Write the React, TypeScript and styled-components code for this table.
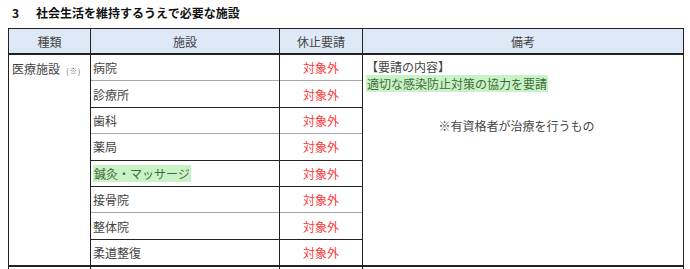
import React from "react";
import styled, { createGlobalStyle } from "styled-components";

const Global = createGlobalStyle`
  html, body { margin: 0; padding: 0; overflow: hidden; background: #fff; }
  body { font-family: "Noto Sans CJK JP", "Noto Sans", sans-serif; color: #333; }
`;

const Page = styled.div`
  width: 690px;
  height: 269px;
  overflow: hidden;
  padding: 0 0 0 8px;
  box-sizing: border-box;
`;

const Title = styled.h2`
  margin: 0;
  height: 28px;
  display: flex;
  align-items: center;
  padding-left: 4px;
  font-size: 12px;
  font-weight: 700;
  color: #111;
  gap: 17px;
  line-height: 1;
  padding-bottom: 2px;
  box-sizing: border-box;
`;

const Table = styled.table`
  border-collapse: collapse;
  table-layout: fixed;
  width: 675px;
  font-size: 12px;
  line-height: 17px;
`;

const Th = styled.th`
  background: #dde9f6;
  border: 1px solid #222;
  border-bottom-width: 2px;
  height: 24px;
  padding: 0;
  font-weight: 400;
  color: #444;
  text-align: center;
  vertical-align: middle;
`;

const Cell = styled.td<{ $line?: "dark" | "gray"; $center?: boolean }>`
  border-left: 1px solid #222;
  border-right: 1px solid #222;
  border-top: 1px solid ${(p) => (p.$line === "gray" ? "#a8a8a8" : "#222")};
  height: 25.4px;
  padding: 0 2px;
  vertical-align: middle;
  text-align: ${(p) => (p.$center ? "center" : "left")};
  color: #444;
  white-space: nowrap;
`;

const MergedCell = styled.td`
  border: 1px solid #222;
  vertical-align: top;
  padding: 3px 2px 0 3px;
  color: #444;
`;

const TypeLabel = styled.span`
  display: inline-flex;
  align-items: baseline;
  gap: 6px;
  padding-top: 2px;
`;

const Note = styled.span`
  font-size: 8px;
  color: #666;
  letter-spacing: 0.5px;
`;

const Red = styled.span`
  color: #ff3a3a;
`;

const Highlight = styled.span`
  background: #c9f3c6;
  color: #3f6b3a;
  padding: 0 1px;
`;

const RemarkBox = styled.div`
  display: flex;
  flex-direction: column;
  align-items: flex-start;
`;

const Remark = styled.div`
  align-self: stretch;
  text-align: center;
  margin-top: 25px;
  padding-right: 14px;
  color: #444;
`;

const NextCell = styled.td`
  border: 1px solid #222;
  border-top-width: 2px;
  height: 20px;
`;

type Row = { name: string; line: "dark" | "gray"; hl?: boolean };

const rows: Row[] = [
  { name: "病院", line: "dark" },
  { name: "診療所", line: "gray" },
  { name: "歯科", line: "dark" },
  { name: "薬局", line: "gray" },
  { name: "鍼灸・マッサージ", line: "dark", hl: true },
  { name: "接骨院", line: "dark" },
  { name: "整体院", line: "gray" },
  { name: "柔道整復", line: "dark" },
];

export default function App() {
  return (
    <Page>
      <Global />
      <Title>
        <span>3</span>
        <span>社会生活を維持するうえで必要な施設</span>
      </Title>
      <Table>
        <colgroup>
          <col style={{ width: 82 }} />
          <col style={{ width: 189 }} />
          <col style={{ width: 83 }} />
          <col style={{ width: 321 }} />
        </colgroup>
        <thead>
          <tr>
            <Th>種類</Th>
            <Th>施設</Th>
            <Th>休止要請</Th>
            <Th>備考</Th>
          </tr>
        </thead>
        <tbody>
          {rows.map((r, i) => (
            <tr key={r.name}>
              {i === 0 && (
                <MergedCell rowSpan={rows.length}>
                  <TypeLabel>
                    医療施設<Note>(※)</Note>
                  </TypeLabel>
                </MergedCell>
              )}
              <Cell $line={i === 0 ? "dark" : r.line}>
                {r.hl ? <Highlight>{r.name}</Highlight> : r.name}
              </Cell>
              <Cell $line={i === 0 ? "dark" : r.line} $center>
                <Red>対象外</Red>
              </Cell>
              {i === 0 && (
                <MergedCell rowSpan={rows.length}>
                  <RemarkBox>
                    <span>【要請の内容】</span>
                    <Highlight>適切な感染防止対策の協力を要請</Highlight>
                    <Remark>※有資格者が治療を行うもの</Remark>
                  </RemarkBox>
                </MergedCell>
              )}
            </tr>
          ))}
          <tr>
            <NextCell />
            <NextCell />
            <NextCell />
            <NextCell />
          </tr>
        </tbody>
      </Table>
    </Page>
  );
}
